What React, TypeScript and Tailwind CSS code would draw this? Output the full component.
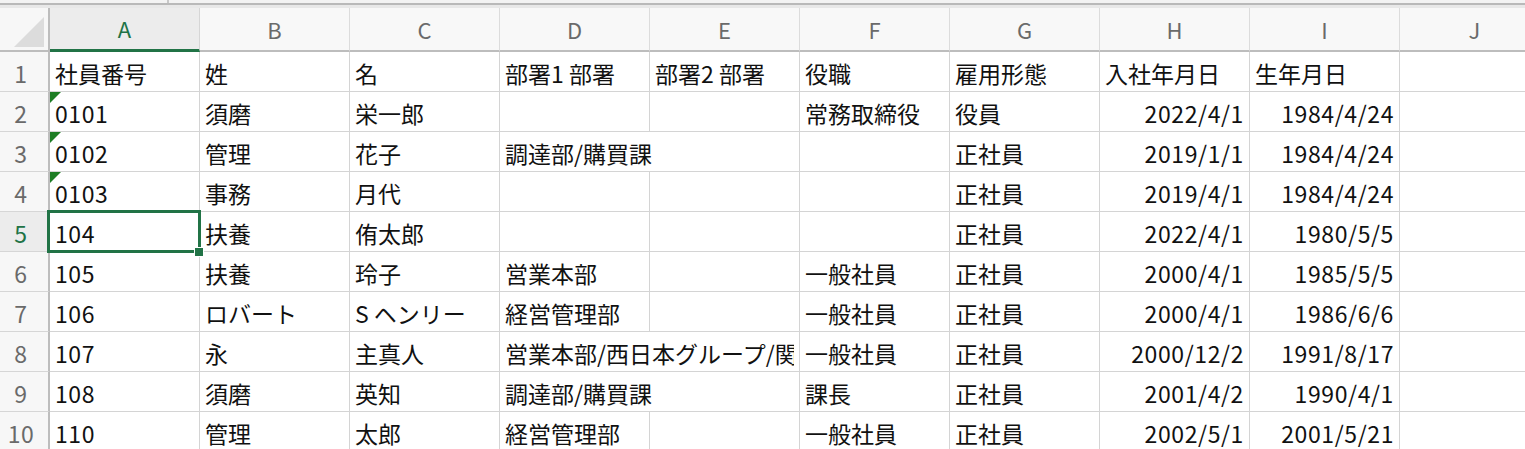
import React from "react";

type Cell = { t: string; span?: number; right?: boolean };

const FONT = { fontFamily: '"Noto Sans CJK JP", "Noto Sans", sans-serif' };

const cols = ["A", "B", "C", "D", "E", "F", "G", "H", "I", "J"];

const L = (t: string, span?: number): Cell => ({ t, span });
const R = (t: string): Cell => ({ t, right: true });

const rows: Cell[][] = [
  [L("社員番号"), L("姓"), L("名"), L("部署1 部署"), L("部署2 部署"), L("役職"), L("雇用形態"), L("入社年月日"), L("生年月日"), L("")],
  [L("0101"), L("須磨"), L("栄一郎"), L(""), L(""), L("常務取締役"), L("役員"), R("2022/4/1"), R("1984/4/24"), L("")],
  [L("0102"), L("管理"), L("花子"), L("調達部/購買課", 2), L("正社員"), R("2019/1/1"), R("1984/4/24"), L(""), L("")].slice(0, 3).concat([L("調達部/購買課", 2), L(""), L("正社員"), R("2019/1/1"), R("1984/4/24"), L("")]),
  [L("0103"), L("事務"), L("月代"), L(""), L(""), L(""), L("正社員"), R("2019/4/1"), R("1984/4/24"), L("")],
  [L("104"), L("扶養"), L("侑太郎"), L(""), L(""), L(""), L("正社員"), R("2022/4/1"), R("1980/5/5"), L("")],
  [L("105"), L("扶養"), L("玲子"), L("営業本部"), L(""), L("一般社員"), L("正社員"), R("2000/4/1"), R("1985/5/5"), L("")],
  [L("106"), L("ロバート"), L("S ヘンリー"), L("経営管理部"), L(""), L("一般社員"), L("正社員"), R("2000/4/1"), R("1986/6/6"), L("")],
  [L("107"), L("永"), L("主真人"), L("営業本部/西日本グループ/関西支社", 2), L("一般社員"), L("正社員"), R("2000/12/2"), R("1991/8/17"), L("")],
  [L("108"), L("須磨"), L("英知"), L("調達部/購買課", 2), L("課長"), L("正社員"), R("2001/4/2"), R("1990/4/1"), L("")],
  [L("110"), L("管理"), L("太郎"), L("経営管理部"), L(""), L("一般社員"), L("正社員"), R("2002/5/1"), R("2001/5/21"), L("")],
];

const isAscii = (s: string) => /^[\x20-\x7e]+$/.test(s);

export default function App() {
  return (
    <div className="w-[1525px] h-[449px] overflow-hidden bg-white" style={FONT}>
      {/* top strip */}
      <div className="flex h-[3px] bg-[#f3f3f3]">
        <div className="w-[167px]" />
        <div className="w-[2px] bg-[#c8c8c8]" />
      </div>
      <div className="h-[2px] bg-[#b9b9b9]" />
      <div className="h-[3px] bg-[#e8e8e8]" />

      <div className="grid w-[1550px] grid-cols-[50px_repeat(10,150px)]">
        {/* header row */}
        <div className="relative h-[44px] bg-[#f7f7f7] border-r-2 border-b-2 border-[#bdbdbd] flex">
          <div className="ml-[14px] mt-[9px] w-[30px] h-[30px] bg-[#dcdcdc] [clip-path:polygon(100%_0,100%_100%,0_100%)]" />
        </div>
        {cols.map((c, i) => (
          <div
            key={c}
            className={
              i === 0
                ? "h-[44px] bg-[#ececec] border-r border-r-[#d6d6d6] border-b-[3px] border-b-[#217346] flex items-center justify-center text-[22px] text-[#217346]"
                : "h-[44px] bg-[#f8f8f8] border-r border-r-[#dcdcdc] border-b-2 border-b-[#bdbdbd] flex items-center justify-center text-[22px] text-[#6a6a6a]"
            }
          >
            {c}
          </div>
        ))}

        {rows.map((row, ri) => {
          const rowNum = ri + 1;
          const selRow = rowNum === 5;
          return (
            <React.Fragment key={ri}>
              <div
                className={
                  selRow
                    ? "h-[40px] bg-[#ececec] border-r-2 border-r-[#bdbdbd] border-b border-b-[#d6d6d6] flex items-center justify-center pr-[6px] pt-[3px] text-[23px] tracking-[0.6px] text-[#217346]"
                    : "h-[40px] bg-[#f7f7f7] border-r-2 border-r-[#bdbdbd] border-b border-b-[#d6d6d6] flex items-center justify-center pr-[6px] pt-[3px] text-[23px] tracking-[0.6px] text-[#6a6a6a]"
                }
              >
                {rowNum}
              </div>
              {row.map((cell, ci) => {
                const isSel = selRow && ci === 0;
                const hasTri = ci === 0 && rowNum >= 2 && rowNum <= 4;
                return (
                  <div
                    key={ci}
                    className={
                      (cell.span === 2 ? "col-span-2 " : "") +
                      (isSel ? "relative z-10 " : hasTri ? "relative " : "") +
                      "h-[40px] border-r border-b border-[#d4d4d4] flex items-center pt-[3px] px-[5px] overflow-visible whitespace-nowrap text-[23px] text-[#111] " +
                      (cell.right ? "justify-end" : "justify-start")
                    }
                  >
                    {hasTri && (
                      <div className="absolute left-0 top-0 w-[11px] h-[11px] bg-[#1d7d24] [clip-path:polygon(0_0,100%_0,0_100%)]" />
                    )}
                    {isSel && (
                      <div className="absolute left-[-3px] top-[-2px] right-[-2px] bottom-[-2px] border-[3px] border-[#217346]">
                        <div className="absolute right-[-6px] bottom-[-7px] w-[10px] h-[10px] bg-[#217346] border border-white" />
                      </div>
                    )}
                    <span
                      className={
                        (cell.span === 2 ? "block overflow-hidden w-full " : "") +
                        (isAscii(cell.t) ? "tracking-[0.6px]" : "")
                      }
                    >
                      {cell.t}
                    </span>
                  </div>
                );
              })}
            </React.Fragment>
          );
        })}
      </div>
    </div>
  );
}
